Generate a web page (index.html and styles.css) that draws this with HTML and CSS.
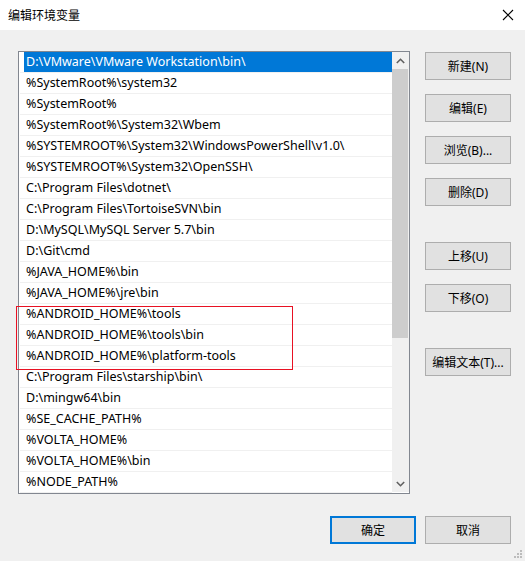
FILE: index.html
```html
<!DOCTYPE html>
<html lang="zh-CN">
<head>
<meta charset="utf-8">
<title>编辑环境变量</title>
<link rel="stylesheet" href="styles.css">
</head>
<body>
<div class="dialog">
  <div class="titlebar">
    <span class="title">编辑环境变量</span>
    <svg class="close" width="12" height="12" viewBox="0 0 12 12"><path d="M1 1 L11 11 M11 1 L1 11" stroke="#000" stroke-width="1.1" fill="none"/></svg>
  </div>
  <div class="body">
    <div class="content">
      <div class="list">
        <div class="rows">
          <div class="row selected"><div class="cell">D:\VMware\VMware Workstation\bin\</div></div>
          <div class="row"><div class="cell">%SystemRoot%\system32</div></div>
          <div class="row"><div class="cell">%SystemRoot%</div></div>
          <div class="row"><div class="cell">%SystemRoot%\System32\Wbem</div></div>
          <div class="row"><div class="cell">%SYSTEMROOT%\System32\WindowsPowerShell\v1.0\</div></div>
          <div class="row"><div class="cell">%SYSTEMROOT%\System32\OpenSSH\</div></div>
          <div class="row"><div class="cell">C:\Program Files\dotnet\</div></div>
          <div class="row"><div class="cell">C:\Program Files\TortoiseSVN\bin</div></div>
          <div class="row"><div class="cell">D:\MySQL\MySQL Server 5.7\bin</div></div>
          <div class="row"><div class="cell">D:\Git\cmd</div></div>
          <div class="row"><div class="cell">%JAVA_HOME%\bin</div></div>
          <div class="row"><div class="cell">%JAVA_HOME%\jre\bin</div></div>
          <div class="row"><div class="cell">%ANDROID_HOME%\tools</div></div>
          <div class="row"><div class="cell">%ANDROID_HOME%\tools\bin</div></div>
          <div class="row"><div class="cell">%ANDROID_HOME%\platform-tools</div></div>
          <div class="row"><div class="cell">C:\Program Files\starship\bin\</div></div>
          <div class="row"><div class="cell">D:\mingw64\bin</div></div>
          <div class="row"><div class="cell">%SE_CACHE_PATH%</div></div>
          <div class="row"><div class="cell">%VOLTA_HOME%</div></div>
          <div class="row"><div class="cell">%VOLTA_HOME%\bin</div></div>
          <div class="row"><div class="cell">%NODE_PATH%</div></div>
        </div>
        <div class="scrollbar">
          <div class="arrow"><svg width="9" height="6" viewBox="0 0 9 6"><path d="M0.8 5 L4.5 1.3 L8.2 5" stroke="#606060" stroke-width="1.6" fill="none"/></svg></div>
          <div class="thumb"></div>
          <div class="track"></div>
          <div class="arrow"><svg width="9" height="6" viewBox="0 0 9 6"><path d="M0.8 1 L4.5 4.7 L8.2 1" stroke="#606060" stroke-width="1.6" fill="none"/></svg></div>
        </div>
      </div>
      <div class="side">
        <button class="btn">新建(N)</button>
        <button class="btn">编辑(E)</button>
        <button class="btn">浏览(B)...</button>
        <button class="btn">删除(D)</button>
        <button class="btn far">上移(U)</button>
        <button class="btn">下移(O)</button>
        <button class="btn far">编辑文本(T)...</button>
      </div>
    </div>
    <div class="footer">
      <button class="btn primary">确定</button>
      <button class="btn">取消</button>
    </div>
  </div>
  <div class="highlight"></div>
  <svg class="grip" width="8" height="8" viewBox="0 0 8 8">
    <rect x="6" y="0" width="2" height="2" fill="#bcbcbc"/>
    <rect x="3" y="3" width="2" height="2" fill="#bcbcbc"/>
    <rect x="6" y="3" width="2" height="2" fill="#bcbcbc"/>
    <rect x="0" y="6" width="2" height="2" fill="#bcbcbc"/>
    <rect x="3" y="6" width="2" height="2" fill="#bcbcbc"/>
    <rect x="6" y="6" width="2" height="2" fill="#bcbcbc"/>
  </svg>
</div>
</body>
</html>
```
FILE: styles.css
```css
* { box-sizing: border-box; }
html, body { margin: 0; padding: 0; }
body {
  background: #f0f0f0;
  font-family: "Noto Sans", "Noto Sans CJK SC", sans-serif;
  font-size: 12px;
  color: #000;
}
.dialog {
  position: relative;
  width: 525px;
  height: 561px;
  background: #f0f0f0;
  overflow: hidden;
}
.titlebar {
  height: 30px;
  background: #fff;
  display: flex;
  align-items: center;
  justify-content: space-between;
  padding: 0 11px 0 8px;
}
.title {
  font-family: "Noto Sans CJK SC", sans-serif;
  font-size: 12px;
  line-height: 30px;
}
.close { display: block; }
.body {
  padding: 21px 14px 0 18px;
}
.content {
  display: flex;
  gap: 15px;
}
.list {
  width: 392px;
  height: 443px;
  border: 1px solid #828790;
  background: #fff;
  display: flex;
  overflow: hidden;
}
.rows {
  flex: 1;
  padding-left: 1px;
  display: flex;
  flex-direction: column;
}
.row {
  height: 21px;
  flex: none;
  border-bottom: 1px solid #f0f0f0;
}
.cell {
  height: 20px;
  margin-left: 4px;
  padding-left: 2px;
  line-height: 20px;
  font-size: 12.5px;
  white-space: nowrap;
}
.row.selected .cell {
  background: #0078d7;
  color: #fff;
}
.scrollbar {
  width: 17px;
  flex: none;
  background: #f0f0f0;
  display: flex;
  flex-direction: column;
  height: 440px;
}
.arrow {
  height: 17px;
  display: flex;
  align-items: center;
  justify-content: center;
  flex: none;
}
.thumb {
  height: 269px;
  margin: 0 1px 0 0;
  background: #cdcdcd;
  flex: none;
}
.track { flex: 1; }
.side {
  width: 86px;
  padding-top: 1px;
  display: flex;
  flex-direction: column;
  gap: 14px;
}
.btn {
  width: 86px;
  height: 28px;
  background: #e1e1e1;
  border: 1px solid #adadad;
  font-family: "Noto Sans", "Noto Sans CJK SC", sans-serif;
  font-size: 12px;
  color: #000;
  padding: 0;
  margin: 0;
}
.side .btn.far { margin-top: 22px; }
.footer {
  display: flex;
  justify-content: flex-end;
  gap: 9px;
  margin-top: 22px;
}
.btn.primary {
  border: 2px solid #0078d7;
}
.highlight {
  position: absolute;
  left: 16px;
  top: 306px;
  width: 277px;
  height: 64px;
  border: 1px solid #e81123;
}
.grip {
  position: absolute;
  right: 3px;
  bottom: 3px;
}
```
